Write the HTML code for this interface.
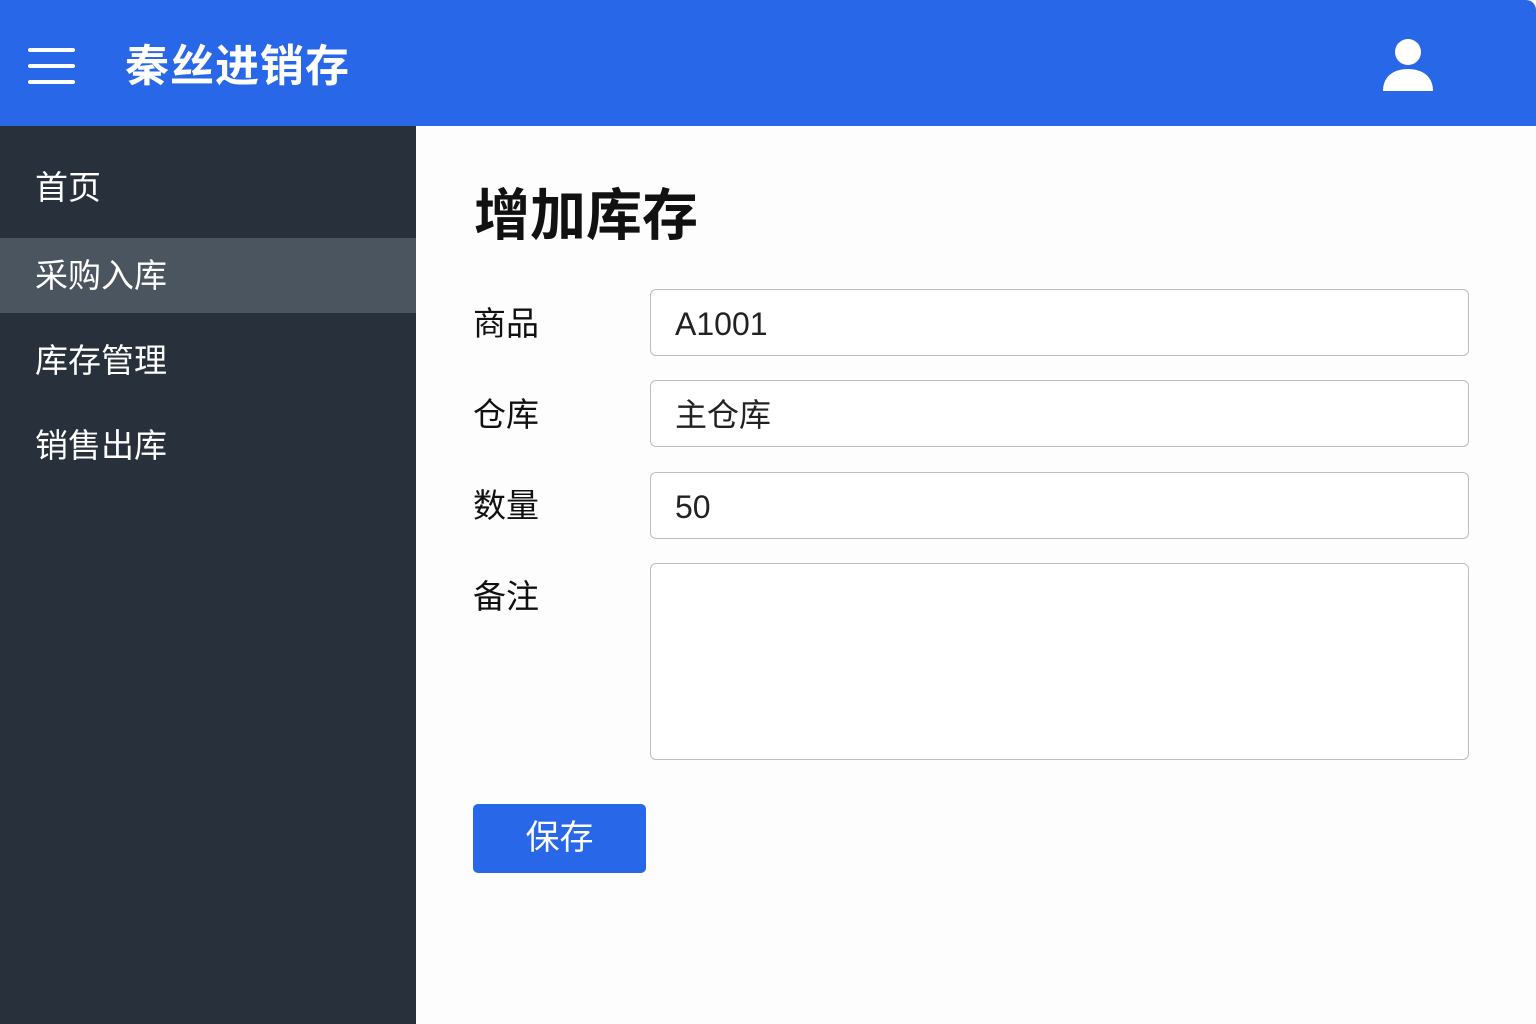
<!DOCTYPE html>
<html><head><meta charset="utf-8"><style>
*{margin:0;padding:0;box-sizing:border-box}
body{width:1536px;height:1024px;overflow:hidden;background:#fdfdfd;font-family:"Liberation Sans","Noto Sans CJK SC",sans-serif;position:relative}
.hdr{position:absolute;left:0;top:0;width:1536px;height:126px;background:#2867e8;border-top-right-radius:10px}
.bar{position:absolute;left:28px;width:47px;height:4px;border-radius:2px;background:#fff}
.title{position:absolute;left:125px;top:39px;font-size:44px;font-weight:bold;color:#fff;line-height:56px;letter-spacing:1px}
.side{position:absolute;left:0;top:126px;width:416px;height:898px;background:#28313b}
.item{position:absolute;left:35px;font-size:33px;color:#fff;line-height:40px}
.act{position:absolute;left:0;top:112px;width:416px;height:75px;background:#4b555f}
h1{position:absolute;left:474px;top:182px;font-size:56px;font-weight:bold;color:#111;line-height:68px}
.lbl{position:absolute;left:473px;font-size:33px;color:#111;line-height:40px}
.inp{position:absolute;left:650px;width:819px;border:1.5px solid #bdbdbd;border-radius:6px;background:#fff;font-size:32px;color:#222;padding-left:24px;padding-top:3px;line-height:62px}
.btn{position:absolute;left:473px;top:804px;width:173px;height:69px;background:#2867e8;border-radius:5px;color:#fff;font-size:34px;text-align:center;line-height:69px}
</style></head><body>
<div class="hdr">
<div class="bar" style="top:48px"></div><div class="bar" style="top:64px"></div><div class="bar" style="top:80px"></div>
<div class="title">秦丝进销存</div>
<svg style="position:absolute;left:1380px;top:36px" width="56" height="58" viewBox="0 0 56 58"><circle cx="28" cy="16" r="13" fill="#fff"/><path d="M3 55 C3 40 14 33 28 33 C42 33 53 40 53 55 Z" fill="#fff"/></svg>
</div>
<div class="side">
<div class="act"></div>
<div class="item" style="top:42px">首页</div>
<div class="item" style="top:130px">采购入库</div>
<div class="item" style="top:215px">库存管理</div>
<div class="item" style="top:300px">销售出库</div>
</div>
<h1>增加库存</h1>
<div class="lbl" style="top:304px">商品</div>
<div class="lbl" style="top:395px">仓库</div>
<div class="lbl" style="top:486px">数量</div>
<div class="lbl" style="top:577px">备注</div>
<div class="inp" style="top:289px;height:67px">A1001</div>
<div class="inp" style="top:380px;height:67px">主仓库</div>
<div class="inp" style="top:472px;height:67px">50</div>
<div class="inp" style="top:563px;height:197px"></div>
<div class="btn">保存</div>
</body></html>
